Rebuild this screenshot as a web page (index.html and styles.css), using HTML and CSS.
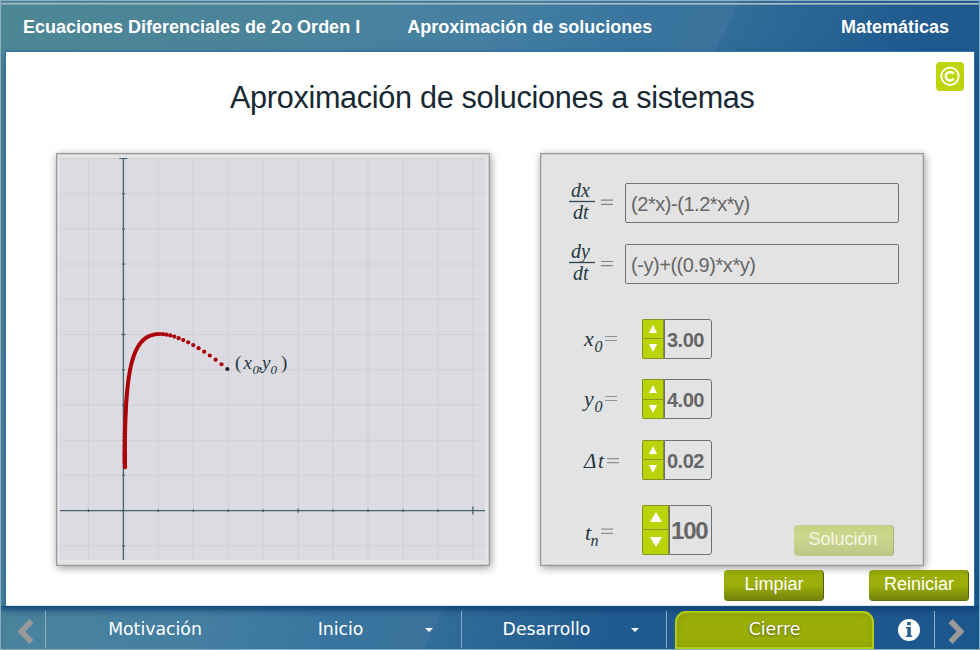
FILE: index.html
```
<!DOCTYPE html>
<html lang="es">
<head>
<meta charset="utf-8">
<title>Aproximación de soluciones a sistemas</title>
<link rel="stylesheet" href="styles.css">
</head>
<body>
<div class="app">
  <header class="header">
    <span class="unit">Ecuaciones Diferenciales de 2o Orden I</span>
    <span class="topic">Aproximación de soluciones</span>
    <span class="subject">Matemáticas</span>
  </header>
  <main class="content">
    <div class="titlebar">
      <h1>Aproximación de soluciones a sistemas</h1>
      <svg class="copyright" viewBox="0 0 28 29"><rect width="28" height="29" rx="4" fill="#bfd50b"/><circle cx="14" cy="14.3" r="8.7" fill="none" stroke="#fff" stroke-width="1.8"/><path d="M17.6 11.8A4.3 4.3 0 1 0 17.6 16.8" fill="none" stroke="#fff" stroke-width="2.5"/></svg>
    </div>
    <div class="panels">
      <section class="panel plot-panel">
        <svg class="plot" viewBox="60 158 425 402">
          <rect x="60" y="158" width="425" height="402" fill="#dcdbe1"/>
          <g id="grid" stroke="#cdd1d8" stroke-width="1"></g>
          <g id="axes" stroke="#49636d" stroke-width="1.3"></g>
          <g id="curve"></g>
          <g class="math" font-size="19">
            <text x="235" y="368.500">(</text><text x="243.500" y="369" class="it">x</text><text x="252.500" y="373.500" class="it sub">0</text><text x="258" y="369">,</text><text x="262" y="369" class="it">y</text><text x="270.500" y="373.500" class="it sub">0</text><text x="281" y="368.500">)</text>
          </g>
        </svg>
      </section>
      <section class="panel form-panel">
        <div class="row eq">
          <svg class="label" viewBox="0 0 60 40"><g class="math" font-size="20"><text x="6" y="13.500" class="it">dx</text><text x="8" y="35.500" class="it">dt</text></g><path d="M4 18.500h26" stroke="#334550" stroke-width="1.300"/><path d="M36 17.200h12M36 21.300h12" stroke="#7d868b" stroke-width="1.200"/></svg>
          <div class="field">(2*x)-(1.2*x*y)</div>
        </div>
        <div class="row eq">
          <svg class="label" viewBox="0 0 60 40"><g class="math" font-size="20"><text x="6" y="13.500" class="it">dy</text><text x="8" y="35.500" class="it">dt</text></g><path d="M4 18.500h26" stroke="#334550" stroke-width="1.300"/><path d="M36 17.500h12M36 21.600h12" stroke="#7d868b" stroke-width="1.200"/></svg>
          <div class="field">(-y)+((0.9)*x*y)</div>
        </div>
        <div class="row num first">
          <svg class="label" viewBox="0 0 60 40"><g class="math"><text x="19" y="26.500" class="it" font-size="22">x</text><text x="29.500" y="32.500" class="it" font-size="16">0</text></g><path d="M40 17.500h12M40 21.500h12" stroke="#8b9398" stroke-width="1.200"/></svg>
          <div class="spinner"><div class="steps"><i class="up"></i><i class="down"></i></div><b>3.00</b></div>
        </div>
        <div class="row num">
          <svg class="label" viewBox="0 0 60 40"><g class="math"><text x="19" y="27" class="it" font-size="22">y</text><text x="29.500" y="33" class="it" font-size="16">0</text></g><path d="M40 17.500h12M40 21.500h12" stroke="#8b9398" stroke-width="1.200"/></svg>
          <div class="spinner"><div class="steps"><i class="up"></i><i class="down"></i></div><b>4.00</b></div>
        </div>
        <div class="row num">
          <svg class="label" viewBox="0 0 60 40"><g class="math"><text x="19" y="28" class="it" font-size="21">Δ</text><text x="33" y="28" class="it" font-size="21">t</text></g><path d="M42 18.700h12M42 22.700h12" stroke="#8b9398" stroke-width="1.200"/></svg>
          <div class="spinner"><div class="steps"><i class="up"></i><i class="down"></i></div><b>0.02</b></div>
        </div>
        <div class="row num last">
          <svg class="label" viewBox="0 0 60 40"><g class="math"><text x="20" y="29.500" class="it" font-size="22">t</text><text x="25.500" y="36" class="it" font-size="16">n</text></g><path d="M36 19.200h12M36 23.300h12" stroke="#8b9398" stroke-width="1.200"/></svg>
          <div class="spinner large"><div class="steps"><i class="up"></i><i class="down"></i></div><b>100</b></div>
          <button class="btn disabled">Solución</button>
        </div>
      </section>
    </div>
    <div class="actions">
      <button class="btn">Limpiar</button>
      <button class="btn">Reiniciar</button>
    </div>
  </main>
  <nav class="nav">
    <span class="arrow prev"><svg viewBox="0 0 18 26"><path d="M15.500 3L5.500 13.500l10 10.500" fill="none" stroke="#999" stroke-width="5.600"/></svg></span>
    <span class="item solo">Motivación</span>
    <span class="item"><span class="name">Inicio</span><i class="caret"></i></span>
    <span class="item"><span class="name">Desarrollo</span><i class="caret"></i></span>
    <span class="tab">Cierre</span>
    <span class="info"><svg viewBox="0 0 24 24"><circle cx="12" cy="12" r="11" fill="#fff"/><path d="M10.200 4h3.600v3.200h-3.600zM9 9h4.800v8.500h1.400V19H9v-1.500h1.400v-7H9z" fill="#205f94"/></svg></span>
    <span class="arrow next"><svg viewBox="0 0 18 26"><path d="M4.500 3L14.500 13.500l-10 10.500" fill="none" stroke="#999" stroke-width="5.600"/></svg></span>
  </nav>
</div>
<script src="plot.js"></script>
</body>
</html>
```
FILE: styles.css
```
* { box-sizing: border-box; }
body { margin: 0; font-family: "Liberation Sans", Arial, sans-serif; }
.app {
  width: 980px; height: 650px; overflow: hidden;
  display: flex; flex-direction: column;
  border: 1px solid #88b0c2;
  background: linear-gradient(116deg, #4d8694 0%, #4b849a 20%, #447fa2 39%, #38749e 50%, #3a749c 57%, #316d98 57.2%, #205b90 71%, #1b578d 100%);
}
.header {
  height: 51px; flex: none; display: flex; align-items: center;
  padding: 2px 30px 0 22px; color: #fff; font-weight: bold; font-size: 18px;
  background: linear-gradient(#0000 2px, #a9c0cb 2px, #a9c0cb 3px, #7e9dab 3px, #7e9dab 4px, #0000 4px);
}
.topic { margin-left: 47px; }
.subject { margin-left: auto; }
.content {
  flex: none; height: 554px; margin: 0 5px; background: #fff;
  border-bottom: 1px solid #d6e4ee;
  box-shadow: 0 0 0 1px #2d74a4, 0 3px 8px #123e7099;
}
.titlebar { height: 101px; display: flex; justify-content: flex-end; padding: 10px 10px 0 0; }
h1 { margin: 15px 182px 0 0; width: 524px; font-size: 30.6px; letter-spacing: -.3px; line-height: 41px; font-weight: normal; color: #182933; white-space: nowrap; }
.copyright { width: 28px; height: 29px; flex: none; }
.panels { display: flex; gap: 50px; margin-left: 50px; }
.panel { height: 413px; background: #e3e3e3; border: 1px solid #999; box-shadow: inset 0 0 0 1px #b9b9b977, 1px 2px 8px #0006; }
.plot-panel { width: 434px; padding: 4px 3px; }
.plot { width: 425px; height: 402px; display: block; }
.math { font-family: "Liberation Serif", "Times New Roman", serif; fill: #243842; }
.it { font-style: italic; }
.sub { font-size: 13px; }
.form-panel { width: 384px; padding: 29px 24px 0 24px; }
.row { display: flex; height: 40px; margin-bottom: 20.5px; }
.label { width: 60px; height: 40px; flex: none; overflow: visible; }
.field { width: 274px; height: 40px; border: 1px solid #737373; border-radius: 2px; font-size: 20px; letter-spacing: -.45px; line-height: 40px; padding-left: 5px; color: #666; }
.first { margin-top: 35px; }
.num .label { margin-right: 17px; }
.last { margin-top: 25px; height: 50px; }
.last .label { margin-top: 5px; }
.spinner { display: flex; width: 70px; height: 40px; color: #666; font-size: 20px; letter-spacing: -.5px; border-radius: 2px; overflow: hidden; }
.spinner b { flex: 1; border: 1px solid #707070; border-radius: 0 3px 3px 0; padding-left: 2px; line-height: 40px; overflow: hidden; white-space: nowrap; }
.steps { width: 22px; display: flex; flex-direction: column; background: #bbd40a; border: 1px solid #819522; }
.up, .down { flex: 1; display: flex; align-items: center; justify-content: center; }
.up { border-bottom: 1px solid #859a1b; }
.up::before, .down::before { content: ""; border-left: 4.5px solid transparent; border-right: 4.5px solid transparent; }
.up::before { border-bottom: 8px solid #fff; }
.down::before { border-top: 8px solid #fff; }
.large { height: 50px; font-size: 24px; letter-spacing: -1.2px; }
.large .steps { width: 27px; }
.large b { line-height: 50px; padding-left: 1px; }
.large .up::before, .large .down::before { border-left-width: 6px; border-right-width: 6px; }
.large .up::before { border-bottom-width: 10px; }
.large .down::before { border-top-width: 10px; }
.btn {
  width: 100px; height: 31px; padding: 0 1px 3px 0; border: 0; border-right: 1px solid #53600a; border-radius: 4px;
  font: 18px "Liberation Sans", Arial, sans-serif; color: #fff;
  background: linear-gradient(#8ca007 0, #9bae09 20%, #9bae09 50%, #75850c 95%, #5c690c);
}
.disabled { margin: 20px 0 0 82px; padding-bottom: 2px; color: #f3f5e6; border-right-color: #a7af85; background: linear-gradient(#c5d183, #cdd88c 40%, #bcc689); }
.actions { display: flex; justify-content: flex-end; gap: 45px; padding: 4px 5px 0 0; }
.actions .btn { padding: 0 0 2px 1px; }
.nav { flex: 1; display: flex; color: #fff; font: 17.3px "DejaVu Sans", sans-serif; line-height: 43px; box-shadow: inset 0 7px 7px -5px #0f3e73; padding-top: 2px; }
.arrow { width: 45px; flex: none; padding-left: 15px; padding-top: 10px; background: linear-gradient(#91adbb, #91adbb) right 3px / 1px 37px no-repeat; }
.arrow svg { width: 18px; height: 26px; display: block; }
.arrow.next { background-position: left 3px; padding-left: 12px; }
.item { width: 205px; display: flex; flex: none; text-align: center; background: linear-gradient(#81a8c2, #81a8c2) right 3px / 1px 37px no-repeat; }
.solo { width: 210px; display: block; background: none; padding-left: 8px; }
.name { width: 169px; }
.solo + .item { width: 206px; }
.caret { width: 0; height: 0; border: 4px solid transparent; border-top-color: #fff; border-bottom: 0; margin-top: 20px; }
.tab { width: 199px; height: 38px; flex: none; margin: 3px 1px 0 8px; border: 2px solid #b4cb15; border-radius: 11px 11px 0 0; background: #9bae08; text-align: center; line-height: 33px; text-shadow: 0 1px 3px #4d5900; box-shadow: inset 0 0 7px #6d7b0966; }
.info { width: 59px; padding: 10px 0 0 22px; }
.info svg { width: 24px; height: 24px; display: block; }
```
FILE: plot.js
```
const NS = "http://www.w3.org/2000/svg";
const ox = 123.4, oy = 510.6, ux = 34.95, uy = 35.22;

function add(parent, tag, attrs) {
  const el = document.createElementNS(NS, tag);
  for (const k in attrs) el.setAttribute(k, attrs[k]);
  document.getElementById(parent).appendChild(el);
}
function line(parent, x1, y1, x2, y2) {
  add(parent, "line", { x1, y1, x2, y2 });
}

for (let i = -1; i <= 10; i++) {
  const x = ox + i * ux, y = oy - i * uy;
  line("grid", x, 158, x, 560);
  line("grid", 60, y, 485, y);
  const tick = i === 10 ? 4 : i === 5 ? 2.2 : 1.4;
  line("axes", x, oy - tick, x, oy + tick);
  line("axes", ox - tick, y, ox + tick, y);
}
line("axes", 60, oy, 485, oy);
line("axes", ox, 158, ox, 560);

// Euler steps of the predator-prey system
let x = 3, y = 4;
const dt = 0.02;
for (let n = 0; n <= 100; n++) {
  add("curve", "circle", { cx: ox - 0.9 + x * ux, cy: oy - 0.7 - y * uy, r: 2.1, fill: n ? "#ad0008" : "#20232a" });
  const dx = 2 * x - 1.2 * x * y, dy = -y + 0.9 * x * y;
  x += dx * dt;
  y += dy * dt;
}
```
